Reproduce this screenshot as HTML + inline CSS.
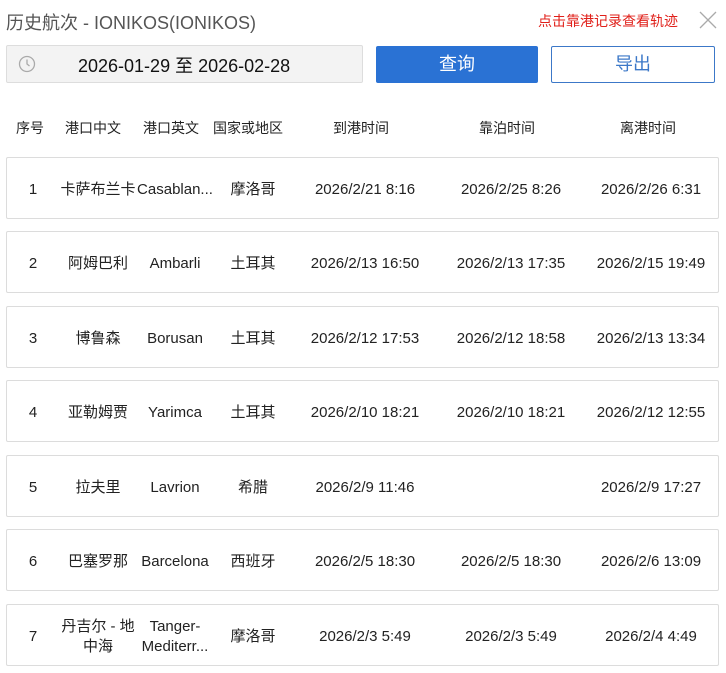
<!DOCTYPE html>
<html><head><meta charset="utf-8"><style>
*{margin:0;padding:0;box-sizing:border-box}
body{width:726px;height:673px;background:#fff;font-family:"Liberation Sans","Noto Sans CJK SC",sans-serif;color:#222;position:relative;overflow:hidden}
.a{position:absolute;white-space:nowrap}
.title{left:6px;top:9px;font-size:18px;color:#555}
.hint{left:538px;top:11px;font-size:14px;color:#e0201a}
.date{left:6px;top:45px;width:357px;height:38px;background:#f3f3f3;border:1px solid #ddd;border-radius:2px}
.date span{position:absolute;left:71px;top:6px;font-size:18px;color:#111}
.btn1{left:376px;top:46px;width:162px;height:37px;background:#2a72d4;color:#fff;font-size:18px;text-align:center;line-height:36px;border-radius:2px}
.btn2{left:551px;top:46px;width:164px;height:37px;border:1px solid #3c78c8;color:#3c78c8;font-size:18px;text-align:center;line-height:35px;border-radius:2px}
.hd{top:118px;font-size:14px;color:#222}
.row{position:absolute;left:6px;width:713px;height:62px;border:1px solid #dcdcdc;border-radius:2px;font-size:15px}
.c{position:absolute;top:2px;height:60px;display:flex;align-items:center;justify-content:center;text-align:center;line-height:20px;white-space:nowrap}
</style></head><body>
<div class="a title">历史航次 - IONIKOS(IONIKOS)</div>
<div class="a hint">点击靠港记录查看轨迹</div>
<svg class="a" style="left:699px;top:11px" width="18" height="18"><path d="M1 1L17 17M17 1L1 17" stroke="#aaa" stroke-width="1.3"/></svg>
<div class="a date"><svg style="position:absolute;left:11px;top:9px" width="18" height="18"><circle cx="9" cy="9" r="7.5" fill="none" stroke="#aaa" stroke-width="1.3"/><path d="M9 4.5V9L11.5 11" fill="none" stroke="#aaa" stroke-width="1.3"/></svg><span>2026-01-29 至 2026-02-28</span></div>
<div class="a btn1">查询</div>
<div class="a btn2">导出</div>
<div class="a hd" style="left:16px">序号</div>
<div class="a hd" style="left:65px">港口中文</div>
<div class="a hd" style="left:143px">港口英文</div>
<div class="a hd" style="left:213px">国家或地区</div>
<div class="a hd" style="left:333px">到港时间</div>
<div class="a hd" style="left:479px">靠泊时间</div>
<div class="a hd" style="left:620px">离港时间</div>

<div class="row" style="top:157px"><div class="c" style="left:0;width:52px">1</div><div class="c" style="left:52px;width:78px">卡萨布兰卡</div><div class="c" style="left:128px;width:80px">Casablan...</div><div class="c" style="left:208px;width:76px">摩洛哥</div><div class="c" style="left:288px;width:140px">2026/2/21 8:16</div><div class="c" style="left:434px;width:140px">2026/2/25 8:26</div><div class="c" style="left:574px;width:140px">2026/2/26 6:31</div></div>
<div class="row" style="top:231px"><div class="c" style="left:0;width:52px">2</div><div class="c" style="left:52px;width:78px">阿姆巴利</div><div class="c" style="left:128px;width:80px">Ambarli</div><div class="c" style="left:208px;width:76px">土耳其</div><div class="c" style="left:288px;width:140px">2026/2/13 16:50</div><div class="c" style="left:434px;width:140px">2026/2/13 17:35</div><div class="c" style="left:574px;width:140px">2026/2/15 19:49</div></div>
<div class="row" style="top:306px"><div class="c" style="left:0;width:52px">3</div><div class="c" style="left:52px;width:78px">博鲁森</div><div class="c" style="left:128px;width:80px">Borusan</div><div class="c" style="left:208px;width:76px">土耳其</div><div class="c" style="left:288px;width:140px">2026/2/12 17:53</div><div class="c" style="left:434px;width:140px">2026/2/12 18:58</div><div class="c" style="left:574px;width:140px">2026/2/13 13:34</div></div>
<div class="row" style="top:380px"><div class="c" style="left:0;width:52px">4</div><div class="c" style="left:52px;width:78px">亚勒姆贾</div><div class="c" style="left:128px;width:80px">Yarimca</div><div class="c" style="left:208px;width:76px">土耳其</div><div class="c" style="left:288px;width:140px">2026/2/10 18:21</div><div class="c" style="left:434px;width:140px">2026/2/10 18:21</div><div class="c" style="left:574px;width:140px">2026/2/12 12:55</div></div>
<div class="row" style="top:455px"><div class="c" style="left:0;width:52px">5</div><div class="c" style="left:52px;width:78px">拉夫里</div><div class="c" style="left:128px;width:80px">Lavrion</div><div class="c" style="left:208px;width:76px">希腊</div><div class="c" style="left:288px;width:140px">2026/2/9 11:46</div><div class="c" style="left:574px;width:140px">2026/2/9 17:27</div></div>
<div class="row" style="top:529px"><div class="c" style="left:0;width:52px">6</div><div class="c" style="left:52px;width:78px">巴塞罗那</div><div class="c" style="left:128px;width:80px">Barcelona</div><div class="c" style="left:208px;width:76px">西班牙</div><div class="c" style="left:288px;width:140px">2026/2/5 18:30</div><div class="c" style="left:434px;width:140px">2026/2/5 18:30</div><div class="c" style="left:574px;width:140px">2026/2/6 13:09</div></div>
<div class="row" style="top:604px"><div class="c" style="left:0;width:52px">7</div><div class="c" style="left:52px;width:78px">丹吉尔 - 地<br>中海</div><div class="c" style="left:128px;width:80px">Tanger-<br>Mediterr...</div><div class="c" style="left:208px;width:76px">摩洛哥</div><div class="c" style="left:288px;width:140px">2026/2/3 5:49</div><div class="c" style="left:434px;width:140px">2026/2/3 5:49</div><div class="c" style="left:574px;width:140px">2026/2/4 4:49</div></div>
</body></html>
